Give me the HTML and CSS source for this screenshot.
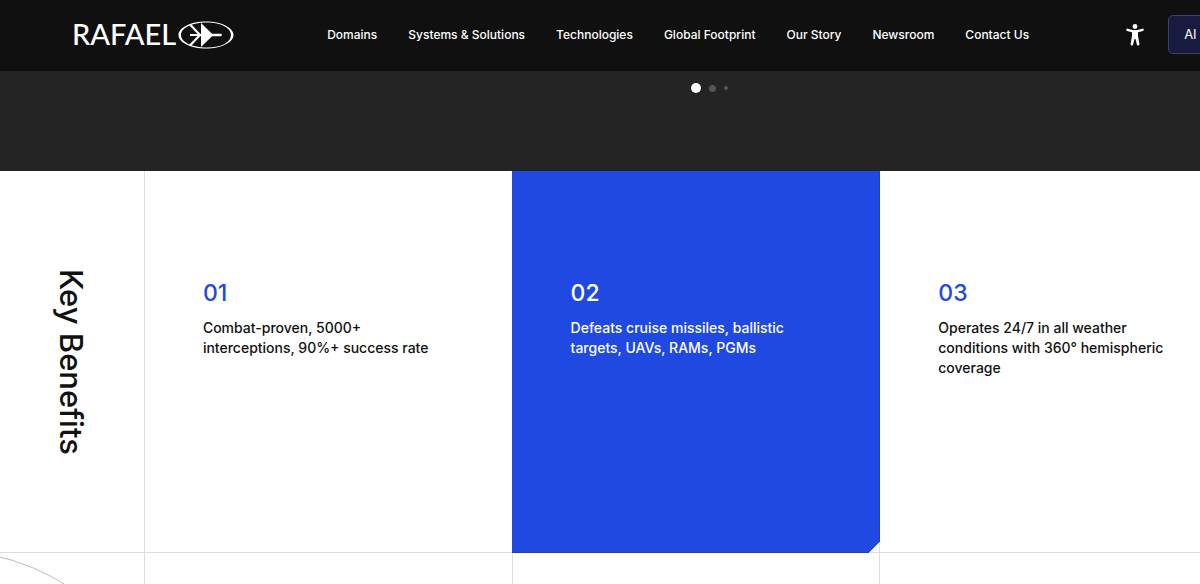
FILE: index.html
```html
<!DOCTYPE html>
<html lang="en">

<head>
    <meta charset="UTF-8">
    <meta name="viewport" content="width=device-width, initial-scale=1.0">
    <title>Rafael - Key Benefits</title>
    <link rel="stylesheet" href="styles.css">
</head>

<body>
    <header class="header">
        <a class="logo" href="#">
            <span class="logo-text">RAFAEL</span>
            <svg class="logo-mark" viewBox="0 0 56 28" aria-hidden="true">
                <path fill="#fff" fill-rule="evenodd" d="M28 .5C43 .5 55.500 6.500 55.500 14S43 27.500 28 27.500 .5 21.500 .5 14 13 .5 28 .5ZM29 1.500C14 1.500 3 7 3 14S14 26.500 29 26.500 53 21 53 14 43 1.500 29 1.500Z"/>
                <path fill="#fff" d="M23 2L34 12.800H43Q45 14 43 15.200H34L23 26Z"/>
                <path fill="none" stroke="#fff" stroke-width="2.200" d="M12 3.500L22 14L12 24.500M12 14H23"/>
            </svg>
        </a>
        <nav class="nav">
            <a href="#">Domains</a>
            <a href="#">Systems &amp; Solutions</a>
            <a href="#">Technologies</a>
            <a href="#">Global Footprint</a>
            <a href="#">Our Story</a>
            <a href="#">Newsroom</a>
            <a href="#">Contact Us</a>
        </nav>
        <div class="tools">
            <button class="access-btn" type="button" aria-label="Accessibility">
                <svg viewBox="0 0 18 22" aria-hidden="true">
                    <circle cx="9" cy="2.5" r="2.4"/>
                    <path d="M.8 4.6L6.5 6H11.5L17.2 4.6Q18.4 6.3 16.9 6.9L12 8.3V12L13.5 20.3Q12.5 22.4 11 20.9L9.5 15H8.5L7 20.9Q5.5 22.4 4.5 20.3L6 12V8.3L1.1 6.9Q-.4 6.3.8 4.6Z"/>
                </svg>
            </button>
            <button class="ai-btn" type="button">AI Chat</button>
        </div>
    </header>

    <main>
        <div class="slider-end">
            <div class="dots">
                <button class="dot dot-active" type="button" aria-label="Slide 1"></button>
                <button class="dot" type="button" aria-label="Slide 2"></button>
                <button class="dot dot-small" type="button" aria-label="Slide 3"></button>
            </div>
        </div>

        <section class="benefits">
            <div class="benefits-title">
                <h2>Key Benefits</h2>
            </div>
            <article class="card">
                <h3>01</h3>
                <p>Combat-proven, 5000+ interceptions, 90%+ success rate</p>
            </article>
            <article class="card card-active">
                <h3>02</h3>
                <p>Defeats cruise missiles, ballistic targets, UAVs, RAMs, PGMs</p>
            </article>
            <article class="card">
                <h3>03</h3>
                <p>Operates 24/7 in all weather conditions with 360° hemispheric coverage</p>
            </article>
            <div class="cell cell-circle"></div>
            <div class="cell"></div>
            <div class="cell"></div>
            <div class="cell"></div>
        </section>
    </main>
</body>

</html>
```
FILE: styles.css
```css
* {
    box-sizing: border-box;
}

body {
    margin: 0;
    min-height: 100vh;
    display: flex;
    flex-direction: column;
    font-family: Inter, "Liberation Sans", sans-serif;
    background-color: #fff;
    color: #111;
    overflow-x: hidden;
}

.header {
    display: flex;
    align-items: center;
    padding: 15px 0 17px 72px;
    background-color: #101010;
    overflow: hidden;
}

.logo {
    display: flex;
    align-items: center;
    gap: 2px;
    flex-shrink: 0;
    color: #fff;
    text-decoration: none;
}

.logo-text {
    padding-bottom: 2px;
    font-family: Lato, sans-serif;
    font-size: 29px;
    font-weight: 500;
    line-height: 36px;
}

.logo-mark {
    width: 56px;
    height: 28px;
}

.nav {
    display: flex;
    flex-shrink: 0;
    gap: 31px;
    margin-left: 93px;
}

.nav a {
    color: #fff;
    font-size: 12px;
    font-weight: 500;
    line-height: 20px;
    text-decoration: none;
    white-space: nowrap;
}

.tools {
    display: flex;
    align-items: center;
    gap: 24px;
    flex-shrink: 0;
    margin-left: auto;
    margin-right: -45px;
}

.access-btn {
    display: flex;
    padding: 0;
    border: none;
    background: none;
    cursor: pointer;
}

.access-btn svg {
    width: 18px;
    height: 22px;
    fill: #fff;
}

.ai-btn {
    padding: 9px 15px;
    border: 1px solid #3e4163;
    border-radius: 5px;
    background-color: #171b3f;
    color: #fff;
    font-family: inherit;
    font-size: 13px;
    line-height: 19px;
    white-space: nowrap;
    cursor: pointer;
}

main {
    flex: 1;
    display: flex;
    flex-direction: column;
}

.slider-end {
    padding: 12px 0 78px;
    padding-left: calc(57% + 7px);
    background-color: #242424;
}

.dots {
    display: flex;
    align-items: center;
    gap: 8px;
}

.dot {
    width: 7px;
    height: 7px;
    padding: 0;
    border: none;
    border-radius: 50%;
    background-color: #555;
    cursor: pointer;
}

.dot-active {
    width: 10px;
    height: 10px;
    background-color: #fff;
}

.dot-small {
    width: 4px;
    height: 4px;
}

.benefits {
    flex: 1;
    display: grid;
    grid-template-columns: 145fr 368fr 368fr 368fr;
    grid-template-rows: auto minmax(31px, 1fr);
    width: 104%;
    overflow: hidden;
}

.benefits-title,
.card,
.cell {
    border-right: 1px solid rgba(17, 17, 17, 0.14);
}

.benefits-title,
.card {
    border-bottom: 1px solid rgba(17, 17, 17, 0.14);
}

.benefits-title {
    display: flex;
    align-items: center;
    justify-content: center;
    padding-right: 2px;
}

.benefits-title h2 {
    margin: 0;
    font-size: 31px;
    font-weight: 500;
    line-height: 40px;
    writing-mode: vertical-rl;
}

.card {
    padding: 107px 58px 174px;
}

.card h3 {
    margin: 0 0 10px;
    color: #2049e1;
    font-size: 23px;
    font-weight: 500;
    line-height: 30px;
}

.card p {
    max-width: 240px;
    margin: 0;
    color: #111;
    font-size: 14px;
    font-weight: 500;
    line-height: 20px;
}

/* blue card with the bottom right corner cut off, covers the line on its left */
.card-active {
    margin-left: -1px;
    padding-left: 59px;
    background: linear-gradient(-45deg, transparent 8px, #2049e1 8px) border-box;
}

.card-active h3,
.card-active p {
    color: #fff;
}

/* big outline circle coming in from the bottom left corner */
.cell-circle {
    position: relative;
    overflow: hidden;
}

.cell-circle::before {
    content: "";
    position: absolute;
    top: -3px;
    left: -276px;
    width: 444px;
    height: 444px;
    border: 1px solid #bbb;
    border-radius: 50%;
}
```
